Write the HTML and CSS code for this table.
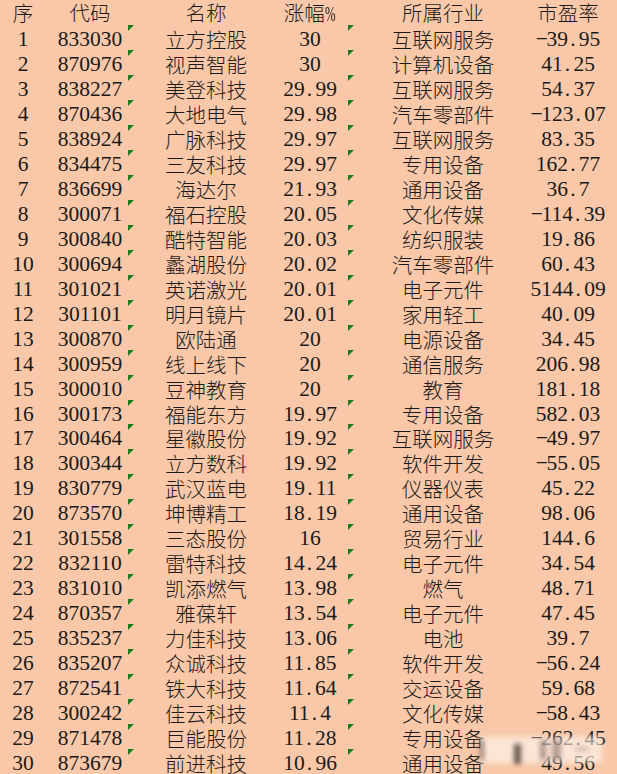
FILE: index.html
```html
<!DOCTYPE html>
<html lang="zh-CN">
<head>
<meta charset="utf-8">
<title>涨幅榜</title>
<link rel="stylesheet" href="styles.css">
</head>
<body>
<div class="sheet">
  <div class="grid">
    <div class="c h k1">序</div><div class="c h k2">代码</div><div class="c h k3n">名称</div><div class="c h k4">涨幅<span class="pct">%</span></div><div class="c h k5n">所属行业</div><div class="c h k6">市盈率</div>

    <div class="c n k1">1</div><div class="c n k2">833030</div><div class="c t k3">立方控股</div><div class="c n k4">30</div><div class="c t k5">互联网服务</div><div class="c n k6"><span class="m">−</span>39<span class="p">.</span>95</div>
    <div class="c n k1">2</div><div class="c n k2">870976</div><div class="c t k3">视声智能</div><div class="c n k4">30</div><div class="c t k5">计算机设备</div><div class="c n k6">41<span class="p">.</span>25</div>
    <div class="c n k1">3</div><div class="c n k2">838227</div><div class="c t k3">美登科技</div><div class="c n k4">29<span class="p">.</span>99</div><div class="c t k5">互联网服务</div><div class="c n k6">54<span class="p">.</span>37</div>
    <div class="c n k1">4</div><div class="c n k2">870436</div><div class="c t k3">大地电气</div><div class="c n k4">29<span class="p">.</span>98</div><div class="c t k5">汽车零部件</div><div class="c n k6"><span class="m">−</span>123<span class="p">.</span>07</div>
    <div class="c n k1">5</div><div class="c n k2">838924</div><div class="c t k3">广脉科技</div><div class="c n k4">29<span class="p">.</span>97</div><div class="c t k5">互联网服务</div><div class="c n k6">83<span class="p">.</span>35</div>
    <div class="c n k1">6</div><div class="c n k2">834475</div><div class="c t k3">三友科技</div><div class="c n k4">29<span class="p">.</span>97</div><div class="c t k5">专用设备</div><div class="c n k6">162<span class="p">.</span>77</div>
    <div class="c n k1">7</div><div class="c n k2">836699</div><div class="c t k3">海达尔</div><div class="c n k4">21<span class="p">.</span>93</div><div class="c t k5">通用设备</div><div class="c n k6">36<span class="p">.</span>7</div>
    <div class="c n k1">8</div><div class="c n k2">300071</div><div class="c t k3">福石控股</div><div class="c n k4">20<span class="p">.</span>05</div><div class="c t k5">文化传媒</div><div class="c n k6"><span class="m">−</span>114<span class="p">.</span>39</div>
    <div class="c n k1">9</div><div class="c n k2">300840</div><div class="c t k3">酷特智能</div><div class="c n k4">20<span class="p">.</span>03</div><div class="c t k5">纺织服装</div><div class="c n k6">19<span class="p">.</span>86</div>
    <div class="c n k1">10</div><div class="c n k2">300694</div><div class="c t k3">蠡湖股份</div><div class="c n k4">20<span class="p">.</span>02</div><div class="c t k5">汽车零部件</div><div class="c n k6">60<span class="p">.</span>43</div>
    <div class="c n k1">11</div><div class="c n k2">301021</div><div class="c t k3">英诺激光</div><div class="c n k4">20<span class="p">.</span>01</div><div class="c t k5">电子元件</div><div class="c n k6">5144<span class="p">.</span>09</div>
    <div class="c n k1">12</div><div class="c n k2">301101</div><div class="c t k3">明月镜片</div><div class="c n k4">20<span class="p">.</span>01</div><div class="c t k5">家用轻工</div><div class="c n k6">40<span class="p">.</span>09</div>
    <div class="c n k1">13</div><div class="c n k2">300870</div><div class="c t k3">欧陆通</div><div class="c n k4">20</div><div class="c t k5">电源设备</div><div class="c n k6">34<span class="p">.</span>45</div>
    <div class="c n k1">14</div><div class="c n k2">300959</div><div class="c t k3">线上线下</div><div class="c n k4">20</div><div class="c t k5">通信服务</div><div class="c n k6">206<span class="p">.</span>98</div>
    <div class="c n k1">15</div><div class="c n k2">300010</div><div class="c t k3">豆神教育</div><div class="c n k4">20</div><div class="c t k5">教育</div><div class="c n k6">181<span class="p">.</span>18</div>
    <div class="c n k1">16</div><div class="c n k2">300173</div><div class="c t k3">福能东方</div><div class="c n k4">19<span class="p">.</span>97</div><div class="c t k5">专用设备</div><div class="c n k6">582<span class="p">.</span>03</div>
    <div class="c n k1">17</div><div class="c n k2">300464</div><div class="c t k3">星徽股份</div><div class="c n k4">19<span class="p">.</span>92</div><div class="c t k5">互联网服务</div><div class="c n k6"><span class="m">−</span>49<span class="p">.</span>97</div>
    <div class="c n k1">18</div><div class="c n k2">300344</div><div class="c t k3">立方数科</div><div class="c n k4">19<span class="p">.</span>92</div><div class="c t k5">软件开发</div><div class="c n k6"><span class="m">−</span>55<span class="p">.</span>05</div>
    <div class="c n k1">19</div><div class="c n k2">830779</div><div class="c t k3">武汉蓝电</div><div class="c n k4">19<span class="p">.</span>11</div><div class="c t k5">仪器仪表</div><div class="c n k6">45<span class="p">.</span>22</div>
    <div class="c n k1">20</div><div class="c n k2">873570</div><div class="c t k3">坤博精工</div><div class="c n k4">18<span class="p">.</span>19</div><div class="c t k5">通用设备</div><div class="c n k6">98<span class="p">.</span>06</div>
    <div class="c n k1">21</div><div class="c n k2">301558</div><div class="c t k3">三态股份</div><div class="c n k4">16</div><div class="c t k5">贸易行业</div><div class="c n k6">144<span class="p">.</span>6</div>
    <div class="c n k1">22</div><div class="c n k2">832110</div><div class="c t k3">雷特科技</div><div class="c n k4">14<span class="p">.</span>24</div><div class="c t k5">电子元件</div><div class="c n k6">34<span class="p">.</span>54</div>
    <div class="c n k1">23</div><div class="c n k2">831010</div><div class="c t k3">凯添燃气</div><div class="c n k4">13<span class="p">.</span>98</div><div class="c t k5">燃气</div><div class="c n k6">48<span class="p">.</span>71</div>
    <div class="c n k1">24</div><div class="c n k2">870357</div><div class="c t k3">雅葆轩</div><div class="c n k4">13<span class="p">.</span>54</div><div class="c t k5">电子元件</div><div class="c n k6">47<span class="p">.</span>45</div>
    <div class="c n k1">25</div><div class="c n k2">835237</div><div class="c t k3">力佳科技</div><div class="c n k4">13<span class="p">.</span>06</div><div class="c t k5">电池</div><div class="c n k6">39<span class="p">.</span>7</div>
    <div class="c n k1">26</div><div class="c n k2">835207</div><div class="c t k3">众诚科技</div><div class="c n k4">11<span class="p">.</span>85</div><div class="c t k5">软件开发</div><div class="c n k6"><span class="m">−</span>56<span class="p">.</span>24</div>
    <div class="c n k1">27</div><div class="c n k2">872541</div><div class="c t k3">铁大科技</div><div class="c n k4">11<span class="p">.</span>64</div><div class="c t k5">交运设备</div><div class="c n k6">59<span class="p">.</span>68</div>
    <div class="c n k1">28</div><div class="c n k2">300242</div><div class="c t k3">佳云科技</div><div class="c n k4">11<span class="p">.</span>4</div><div class="c t k5">文化传媒</div><div class="c n k6"><span class="m">−</span>58<span class="p">.</span>43</div>
    <div class="c n k1">29</div><div class="c n k2">871478</div><div class="c t k3">巨能股份</div><div class="c n k4">11<span class="p">.</span>28</div><div class="c t k5">专用设备</div><div class="c n k6"><span class="m">−</span>262<span class="p">.</span>45</div>
    <div class="c n k1">30</div><div class="c n k2">873679</div><div class="c t k3">前进科技</div><div class="c n k4">10<span class="p">.</span>96</div><div class="c t k5">通用设备</div><div class="c n k6">49<span class="p">.</span>56</div>
  </div>
  <div class="wm">
    <span class="blob b1"></span><span class="blob b2"></span><span class="blob b3"></span><span class="blob b4"></span><span class="blob b5"></span>
  </div>
</div>
</body>
</html>
```

FILE: styles.css
```css
html, body {
  margin: 0;
  padding: 0;
  background: #f8c8a9;
}
.sheet {
  position: relative;
  width: 617px;
  height: 774px;
  overflow: hidden;
  background: #f8c8a9;
  color: #1c1a19;
}
.grid {
  display: grid;
  grid-template-columns: 46px 82px 156px 64px 190px 79px;
  grid-auto-rows: 24.97px;
}
.c {
  position: relative;
  box-sizing: border-box;
  text-align: center;
  white-space: nowrap;
  padding-top: 3px;
  line-height: 22px;
}
.h, .t {
  font-family: "Noto Sans CJK SC", sans-serif;
  font-size: 20.5px;
  font-weight: 300;
}
.h {
  padding-top: 0;
  line-height: 25px;
  margin: 0 -20px;
}
.n {
  font-family: "Liberation Serif", serif;
  font-size: 21.5px;
  margin: 0 -20px;
}
.k2 { padding-left: 6px; }
.k4 { padding-right: 12px; }
.k6 { padding-right: 19px; }
.k3::before, .k5::before {
  content: "";
  position: absolute;
  left: 0;
  top: 0;
  width: 0;
  height: 0;
  border-top: 6px solid #1f7a1c;
  border-right: 6px solid transparent;
}
.p {
  display: inline-block;
  width: 0.5em;
  text-align: left;
  text-indent: 0.1em;
}
.m {
  display: inline-block;
  width: 0.5em;
  text-align: center;
}
.pct {
  font-family: "Liberation Serif", serif;
  display: inline-block;
  width: 0.55em;
  transform: scaleX(0.62);
  transform-origin: left center;
}
.wm {
  position: absolute;
  left: 480px;
  top: 737px;
  width: 122px;
  height: 26px;
  background: rgba(255, 248, 244, 0.6);
  filter: blur(2.5px);
}
.blob {
  position: absolute;
  top: 3px;
  height: 20px;
  background: rgba(60, 40, 30, 0.55);
}
.b1 { left: 0; width: 4px; }
.b2 { left: 34px; width: 7px; background: rgba(40, 25, 20, 0.7); top: 7px; }
.b3 { left: 60px; width: 6px; background: rgba(90, 70, 60, 0.5); }
.b4 { left: 72px; width: 9px; background: rgba(90, 70, 60, 0.45); }
.b5 { left: 95px; width: 14px; height: 4px; top: 10px; background: rgba(120, 100, 90, 0.35); }
```
